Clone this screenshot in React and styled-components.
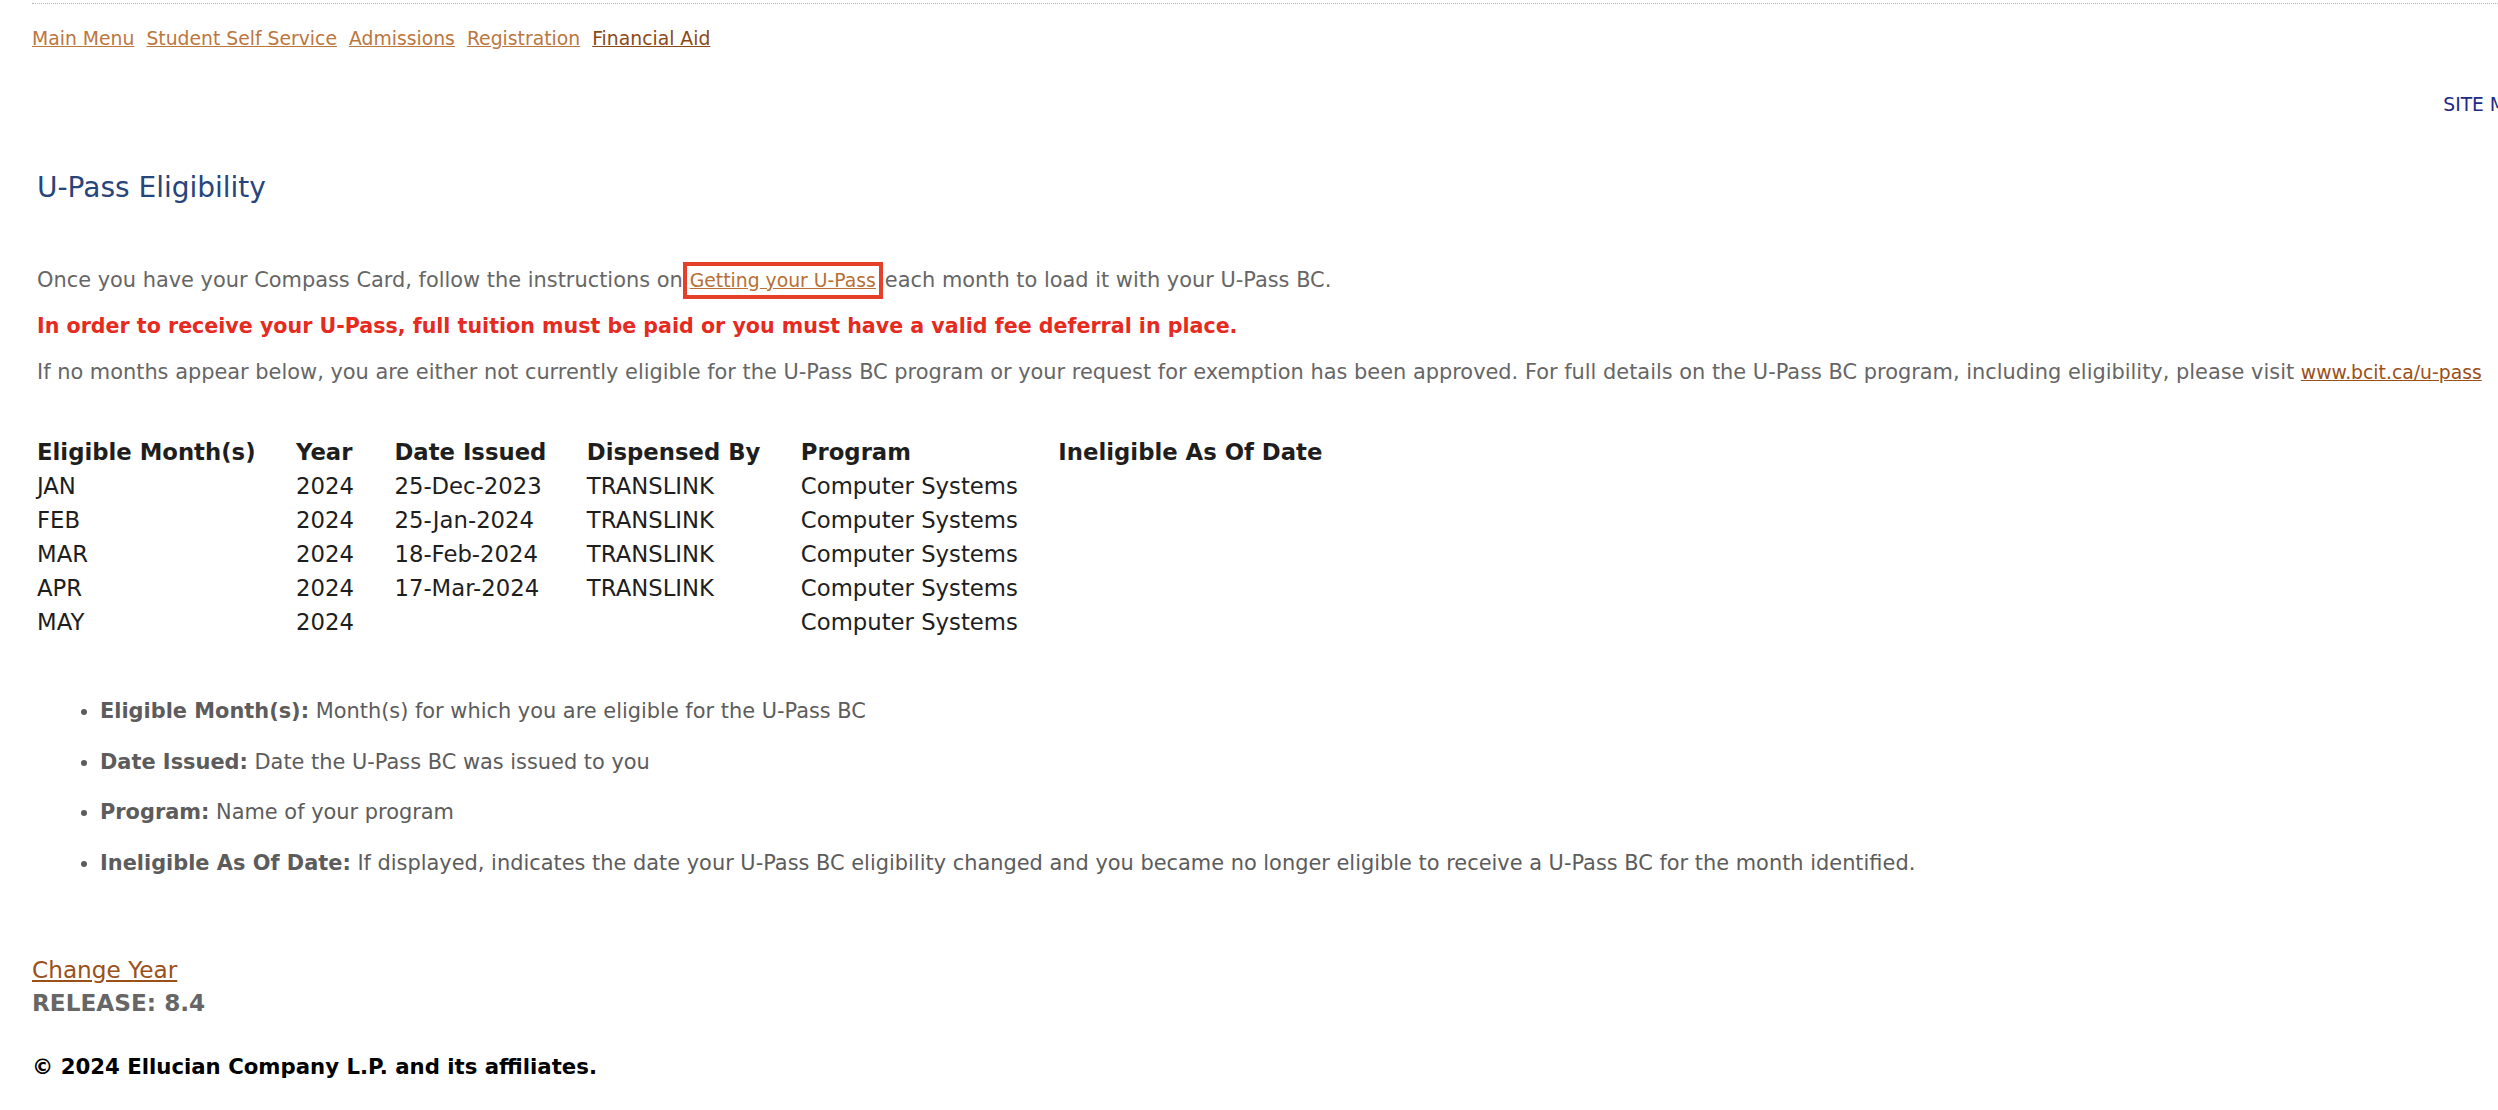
import React from 'react';
import styled, { createGlobalStyle } from 'styled-components';

const GlobalStyle = createGlobalStyle`
  html, body {
    margin: 0;
    padding: 0;
    background: #ffffff;
    overflow: hidden;
  }
  body {
    font-family: "DejaVu Sans", Verdana, sans-serif;
    color: #666666;
  }
`;

const Page = styled.div`
  width: 2560px;
  padding: 3px 0 0 32px;
  box-sizing: border-box;
`;

const TopNav = styled.nav`
  border-top: 1px dotted #b5b5b5;
  padding-top: 24px;
  display: flex;
  gap: 12px;
  font-size: 18.8px;
  line-height: 22px;
`;

const NavLink = styled.a`
  color: ${(p) => (p.$current ? '#8a4a17' : '#bb7740')};
  text-decoration: underline;
  cursor: pointer;
`;

const SiteMapBar = styled.div`
  margin-top: 44px;
  padding-right: 30px;
  text-align: right;
  font-size: 18.7px;
  line-height: 22px;
  color: #222a86;
`;

const Content = styled.main`
  padding-left: 5px;
`;

const Title = styled.h2`
  margin: 54.5px 0 0;
  font-size: 28px;
  line-height: 33px;
  font-weight: normal;
  color: #27457a;
`;

const Para = styled.p`
  margin: ${(p) => (p.$first ? '64px' : '21px')} 0 0;
  font-size: ${(p) => (p.$alert ? '20.6px' : '20.9px')};
  line-height: 25px;
  color: ${(p) => (p.$alert ? '#e62a1e' : '#666666')};
  font-weight: ${(p) => (p.$alert ? 'bold' : 'normal')};
  white-space: nowrap;
`;

const InlineLink = styled.a`
  font-size: 18.8px;
  color: ${(p) => (p.$dark ? '#9a5019' : '#b86f35')};
  text-decoration: underline;
  cursor: pointer;
  margin: ${(p) => (p.$marked ? '0 7px 0 5px' : '0')};
  padding: ${(p) => (p.$marked ? '3px 2px' : '0')};
  outline: ${(p) => (p.$marked ? '4px solid #e6402a' : 'none')};
  outline-offset: 1px;
`;

const FooterLink = styled.a`
  color: #9a5019;
  text-decoration: underline;
  cursor: pointer;
`;

const Table = styled.table`
  margin-top: 51px;
  border-collapse: collapse;
  font-size: 22.75px;
  line-height: 27px;
  color: #1e1e1e;
`;

const Th = styled.th`
  text-align: left;
  font-weight: bold;
  padding: 3.5px 40.5px 3.5px 0;
  white-space: nowrap;
`;

const Td = styled.td`
  padding: 3.5px 40.5px 3.5px 0;
  white-space: nowrap;
`;

const Legend = styled.ul`
  margin: 59.5px 0 0;
  padding-left: 63px;
  font-size: 20.9px;
  line-height: 25px;
  color: #5c5c5c;
`;

const LegendItem = styled.li`
  margin-bottom: 25.5px;
  &:last-child {
    margin-bottom: 0;
  }
`;

const Footer = styled.footer`
  margin-top: 77px;
  margin-left: -5px;
`;

const FooterLine = styled.div`
  font-size: 23.2px;
  line-height: 33px;
  font-weight: ${(p) => (p.$bold ? 'bold' : 'normal')};
  color: #666666;
`;

const Copyright = styled.div`
  margin-top: 35px;
  font-size: 21.25px;
  line-height: 25px;
  font-weight: bold;
  color: #000000;
`;

const navItems = ['Main Menu', 'Student Self Service', 'Admissions', 'Registration', 'Financial Aid'];

const rows = [
  { month: 'JAN', year: '2024', issued: '25-Dec-2023', by: 'TRANSLINK', program: 'Computer Systems' },
  { month: 'FEB', year: '2024', issued: '25-Jan-2024', by: 'TRANSLINK', program: 'Computer Systems' },
  { month: 'MAR', year: '2024', issued: '18-Feb-2024', by: 'TRANSLINK', program: 'Computer Systems' },
  { month: 'APR', year: '2024', issued: '17-Mar-2024', by: 'TRANSLINK', program: 'Computer Systems' },
  { month: 'MAY', year: '2024', issued: '', by: '', program: 'Computer Systems' },
];

const legend = [
  ['Eligible Month(s):', 'Month(s) for which you are eligible for the U-Pass BC'],
  ['Date Issued:', 'Date the U-Pass BC was issued to you'],
  ['Program:', 'Name of your program'],
  [
    'Ineligible As Of Date:',
    'If displayed, indicates the date your U-Pass BC eligibility changed and you became no longer eligible to receive a U-Pass BC for the month identified.',
  ],
];

const App = () => (
  <Page>
    <GlobalStyle />
    <TopNav>
      {navItems.map((item, i) => (
        <NavLink key={item} $current={i === navItems.length - 1}>
          {item}
        </NavLink>
      ))}
    </TopNav>
    <SiteMapBar>SITE MAP</SiteMapBar>

    <Content>
      <Title>U-Pass Eligibility</Title>
      <Para $first>
        Once you have your Compass Card, follow the instructions on
        <InlineLink $marked>Getting your U-Pass</InlineLink>
        each month to load it with your U-Pass BC.
      </Para>
      <Para $alert>
        In order to receive your U-Pass, full tuition must be paid or you must have a valid fee deferral in place.
      </Para>
      <Para>
        If no months appear below, you are either not currently eligible for the U-Pass BC program or your request
        for exemption has been approved. For full details on the U-Pass BC program, including eligibility, please
        visit <InlineLink $dark>www.bcit.ca/u-pass</InlineLink>
      </Para>

      <Table>
        <thead>
          <tr>
            <Th>Eligible Month(s)</Th>
            <Th>Year</Th>
            <Th>Date Issued</Th>
            <Th>Dispensed By</Th>
            <Th>Program</Th>
            <Th>Ineligible As Of Date</Th>
          </tr>
        </thead>
        <tbody>
          {rows.map((r) => (
            <tr key={r.month}>
              <Td>{r.month}</Td>
              <Td>{r.year}</Td>
              <Td>{r.issued}</Td>
              <Td>{r.by}</Td>
              <Td>{r.program}</Td>
              <Td />
            </tr>
          ))}
        </tbody>
      </Table>

      <Legend>
        {legend.map(([label, text]) => (
          <LegendItem key={label}>
            <b>{label}</b> {text}
          </LegendItem>
        ))}
      </Legend>

      <Footer>
        <FooterLine>
          <FooterLink>Change Year</FooterLink>
        </FooterLine>
        <FooterLine $bold>RELEASE: 8.4</FooterLine>
        <Copyright>© 2024 Ellucian Company L.P. and its affiliates.</Copyright>
      </Footer>
    </Content>
  </Page>
);

export default App;
